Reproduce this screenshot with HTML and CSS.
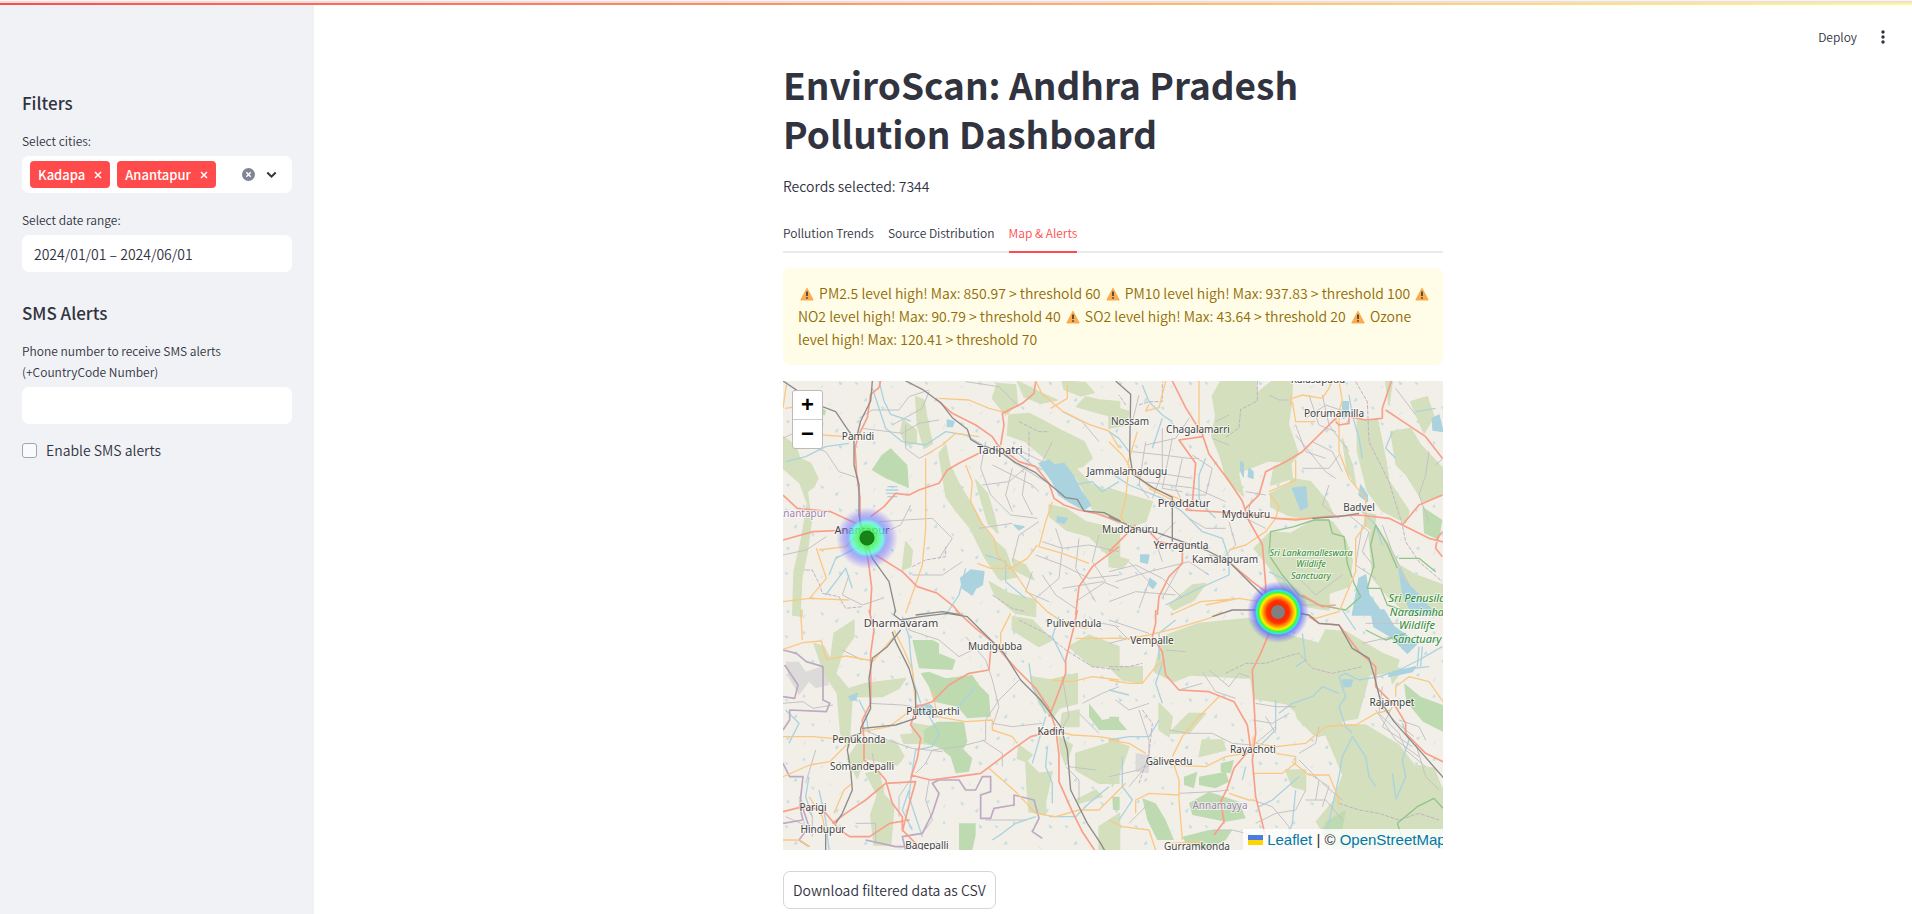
FILE: index.html
```html
<!DOCTYPE html>
<html lang="en">
<head>
<meta charset="utf-8">
<title>EnviroScan: Andhra Pradesh Pollution Dashboard</title>
<link rel="stylesheet" href="styles.css">
</head>
<body>
<svg class="defs" width="0" height="0" aria-hidden="true">
  <defs>
    <linearGradient id="amber" x1="0" y1="0" x2="0" y2="1"><stop offset="0" stop-color="#f7b649"/><stop offset="1" stop-color="#ffa94d"/></linearGradient>
    <symbol id="warn" viewBox="0 0 14 14"><path d="M7 1.200 13.200 13H.8z" fill="url(#amber)" stroke="#f9ab4e" stroke-linejoin="round"/><path d="M7 4.500v4.600M7 10.300v1.500" stroke="#3f3f46" stroke-width="1.700"/></symbol>
    <symbol id="cross" viewBox="0 0 8 8"><path d="M1 1l6 6M7 1L1 7" fill="none" stroke="#fff" stroke-width="1.500"/></symbol>
  </defs>
</svg>
<div class="decoration"><div class="gradient"></div></div>
<div class="app">
<aside class="sidebar">
  <h2>Filters</h2>
  <div class="field">
    <label for="cities">Select cities:</label>
    <div class="control multiselect">
      <span class="tag">Kadapa<button aria-label="Remove Kadapa"><svg width="8" height="8"><use href="#cross"/></svg></button></span>
      <span class="tag">Anantapur<button aria-label="Remove Anantapur"><svg width="8" height="8"><use href="#cross"/></svg></button></span>
      <input id="cities" type="text">
      <button aria-label="Clear all"><svg width="13" height="13" viewBox="0 0 13 13"><circle cx="6.500" cy="6.500" r="6.500" fill="#808495"/><path d="M4.300 4.300l4.400 4.400M8.700 4.300l-4.400 4.400" stroke="#fff" stroke-width="1.500"/></svg></button>
      <button aria-label="Open"><svg width="11" height="8" viewBox="0 0 11 8"><path d="M1.300 1.500l4.200 4.200 4.200-4.200" fill="none" stroke="#31333f" stroke-width="2"/></svg></button>
    </div>
  </div>
  <div class="field">
    <label for="dates">Select date range:</label>
    <input class="control" id="dates" type="text" value="2024/01/01 – 2024/06/01">
  </div>
  <h2>SMS Alerts</h2>
  <div class="field">
    <label for="phone">Phone number to receive SMS alerts (+CountryCode Number)</label>
    <input class="control" id="phone" type="text">
  </div>
  <label class="check"><input type="checkbox">Enable SMS alerts</label>
</aside>
<main class="main">
  <header class="toolbar">
    <button>Deploy</button>
    <button aria-label="Menu"><svg width="4" height="14" viewBox="0 0 4 14" fill="#31333f"><circle cx="2" cy="2" r="1.700"/><circle cx="2" cy="7" r="1.700"/><circle cx="2" cy="12" r="1.700"/></svg></button>
  </header>
  <div class="column">
    <h1>EnviroScan: Andhra Pradesh Pollution Dashboard</h1>
    <p class="records">Records selected: 7344</p>
    <nav class="tabs"><button>Pollution Trends</button><button>Source Distribution</button><button class="active">Map &amp; Alerts</button></nav>
    <p class="alert"><svg class="warn"><use href="#warn"/></svg> PM2.5 level high! Max: 850.97 &gt; threshold 60 <svg class="warn"><use href="#warn"/></svg> PM10 level high! Max: 937.83 &gt; threshold 100 <svg class="warn"><use href="#warn"/></svg> NO2 level high! Max: 90.79 &gt; threshold 40 <svg class="warn"><use href="#warn"/></svg> SO2 level high! Max: 43.64 &gt; threshold 20 <svg class="warn"><use href="#warn"/></svg> Ozone level high! Max: 120.41 &gt; threshold 70</p>
    <div class="map">
      <svg class="tiles" viewBox="0 0 660 469" preserveAspectRatio="xMidYMid slice">
        <defs>
          <radialGradient id="heatLow"><stop offset="0" stop-color="#30e830"/><stop offset=".28" stop-color="#3df55c"/><stop offset=".42" stop-color="#55fca0"/><stop offset=".52" stop-color="#5bf0ee" stop-opacity=".95"/><stop offset=".62" stop-color="#6c8cff" stop-opacity=".8"/><stop offset=".78" stop-color="#6a60ff" stop-opacity=".45"/><stop offset="1" stop-color="#6a60ff" stop-opacity="0"/></radialGradient>
          <radialGradient id="heatHigh"><stop offset="0" stop-color="#f01800"/><stop offset=".36" stop-color="#ff3000"/><stop offset=".46" stop-color="#ff9000"/><stop offset=".56" stop-color="#fff200"/><stop offset=".63" stop-color="#40f830"/><stop offset=".7" stop-color="#30e8f0"/><stop offset=".75" stop-color="#5060ff" stop-opacity=".7"/><stop offset="1" stop-color="#6a60ff" stop-opacity="0"/></radialGradient>
          <pattern id="ponds" width="210" height="190" patternUnits="userSpaceOnUse"><path class="pond" d="M18 22l9 3-4 4zM75 9l4 6-7 2zM124 38l9-5M180 20l3 10 7-4zM45 78l7-9 2 8zM97 96l8 2-2 6zM150 84l5 8M190 110l-9 8M22 140l10-4-4 8zM73 160l6-12M125 142l4 8 6-3zM168 168l10-6-4 10z"/></pattern>
        </defs>
        <rect width="660" height="469" fill="#f2efe9"/>
        <g transform="translate(-4 -6) scale(.33333)">
          <rect x="12" y="18" width="1980" height="1407" fill="url(#ponds)"/>
          <g class="wood">
            <path d="M12 185l36 25 15 40 32 15 22 45-12 25-20 15 12 90-12 90-16 75-6 115-22 0 4-130 22-95 18-110-22-60-22-20-29-25z"/>
            <path d="M372 135l40 30 0 40-32 5-15-40zM410 65l25 10 10 60 15 70-25 15-20-70z"/>
            <path d="M480 235l20-25 12 60 30 60 40 65 32 60 25 35 40 35 25 70-45 15-40-60-45-90-45-55-28-40z"/>
            <path d="M590 315l35 40 20 65 12 55-30-30-18-60z"/>
            <path d="M640 70l15-45 55 5 5 55-35 35zM715 18l70 35 50 22-50 10-50-20zM690 120l60-5 40 20 55 30 70 35 25 50-30 25-60 15-40-30-70-60-55-20z"/>
            <path d="M850 18l70 5 25 30-40 10-50-20zM920 65l40 10 62 5v50l-60-15-70-20zM820 230l60 40 60 60 82 30v85l-80-40-50-100-70-30z"/>
            <path d="M810 390l50 10 60 40 102 25v90l-30-10-60-60-70-20-50-40zM380 500l20 25-5 50-25 10z"/>
            <path d="M620 550l60 5 35 50-50 10zM700 550l40 20 25 45-60-30z"/>
            <path d="M630 620l60 35 80 20 0 50-60-10-60-50z"/>
          </g>
          <path class="park" d="M335 220l50 50 5 70-70-30-42-25 30-45zM130 100l12 8-6 14-12-10z"/>
        </g>
        <g transform="translate(326 -6) scale(.33333)">
          <g class="wood">
            <path d="M335 18l105 0 5 35 45-35 60 0-2 60-10 70 30 90-20 25-70-5-65 25-25 10 15 70-50-50-20-70-25-60 12-60-10-60z"/>
            <path d="M495 275l50-15 5 50-65 20zM485 355l60-30 0-15 60 10 50 60 20 45-80 5-60-10-50-25z"/>
            <path d="M700 190l30 80 10 60-25-40zM745 135l60-2 25 120 10 65 60 90-10 35-70-35-45-60-30-120z"/>
            <path d="M830 20l20 0-10 70zM905 80l50-15 20 60-30 50zM845 170l60-10 30 50 67 70v80l-60 20-50-80-30-30z"/>
            <path d="M0 90l60 20-10 40-50 10zM0 340l60 20 70 20-20 60-50 15-60-60zM0 540l60 15-20 25-40-5z"/>
            <path d="M485 470l60 5 70-40 55 5 40 55 20 60-10 80-60 20 0 50-70-10-60-40-50-80-45-55z"/>
            <path d="M780 480l20-30 40 60 30 60 50 30 82 30v90l-100 0-60-50-50-60z"/>
            <path d="M180 690l70-60 40-5-35 50-60 30zM340 225l20 20 15 80-30-60zM770 415l30 5-5 50-30-20z"/>
          </g>
          <path class="park" d="M940 395l60 40-10 60-45-20z"/>
        </g>
        <g transform="translate(-4 229) scale(.33333)">
          <path d="M20 155l40 0 20 30 60-20 10 60-40 10-20-20-30 40-30-50z" fill="#dcdbd9"/>
          <g class="wood">
            <path d="M45 0h25v20l-25-5zM165 70l60-40 0 50-35 50-20 60 50 60-10 160-25-40-10-120-40-60-30-90 30 10 20 40z"/>
            <path d="M180 245l80-25 120-15-20 30-50 25-115 0zM240 395l110 0 25 45-20 25-100-20-20 60-30-60zM260 490l40-5 15 70 30 30-10 120-50 0-10-90 20-60z"/>
            <path d="M400 340l60 10 0 55-60-10zM365 375l50-5 10 30-50 0zM700 20l60 10 60 60-40 20-80-50z"/>
            <path d="M755 200l60 10 80-20 0 90-55 15-20 30-40-45zM870 110l60-35 90 35v60l-80 0zM850 310l50-10 0 50-55 0zM720 405l40 30-20 20-25-10z"/>
            <path d="M740 450l40 40 40-5-20 90 0 40-50-10-5-60zM840 380l40 25-20 60-15-40zM890 430l130-40 0 130-60 0-70-40zM960 650l62-40v110h-62zM890 570l60-30 20 20-70 20z"/>
          </g>
          <g class="park">
            <path d="M400 90l60 0 20 10 0 30 50 20-10 30-100-5zM450 185l50 20 80-10 20 30 30 30 5 65-70 5-30-35-70-15-15-45-25-40zM435 360l40-25 80 0 10 60-10 20-60 5-60-25zM490 420l60-5 30 30-10 40-40 5-15-50zM540 640l50 0 0 35-10 45h-40zM930 280l40 50 50-10v40h-60l-30-40zM1000 560h22v40h-20z"/>
          </g>
        </g>
        <g transform="translate(326 229) scale(.33333)">
          <path d="M80 430l40 5 0 55-40-5z" fill="#dcdbd9"/>
          <g class="wood">
            <path d="M160 80l110-40 150-15 60 35 150 40 20-40 60 5 110 65 50 20-10 35-80 10-15 60-20 70-60 10-40-30-30 70-50-50-10-40-120-20-10-60-180-10-50 20-60-30z"/>
            <path d="M0 170l100 0 0 50-60-10zM440 170l40-60 80 20 70 50 20 60 35 60 20 60-80 20-60-70-90-80z"/>
            <path d="M640 350l60-5 70 0 100 60 45 60 60 10 27 70 0 170-330 0-50-80 50-60 30-80z"/>
            <path d="M840 160l40 20-30 40zM180 370l60-60 50 0-50 60zM280 390l60 0 10 30-80 20zM0 390l60 20-20 60-30 60zM530 480l60 0 0 60-40-10zM150 280l40 40-10 60-30-20z"/>
          </g>
          <g class="park">
            <path d="M0 320l20 0 35 40-40 0zM225 500l40-15-10 50-30-10zM270 500l80-15 10 30-40 20-50-10zM335 460l40-10-10 40-30-5zM240 580l60-35 90 30 20 50-60 10-100-20zM100 565l40 15 30 50 25 60-50 0-30-60zM220 680l80-20 70 0-20 30-60 30-60-20zM650 635l60-35-10 60-60 15zM885 220l50 40 67 25v80l-60-30-50-60z"/>
          </g>
        </g>
        <g transform="translate(-4 -6) scale(.33333)">
          <g class="water">
            <path d="M280 40l20 60 20 60 50 40 70 10 60-40 60 10 50 30M20 260l60-15 60-30 70-10M300 18l15 60 20 40 60 20M220 640l-20-60-60 80M560 580l-20 80-40 60M620 540l60 20 0 60 60 50M880 330l60-10 30 30 50-30M700 220l60 50 30 15M150 600l20-50 60-30"/>
            <path class="lake" d="M780 265l30-10 15 15 30-5 30 40 20 40 30 45-20 15-45-25-30-20-20-40zM545 610l30-25 40 5-5 40-20 10-10 20-30-20zM505 135l20 5-5 15-15 0zM835 425l30 5-10 15-20-5zM705 450l30 5-15 10z"/>
            <path d="M325 335h30M320 345h38M322 355h35M325 365h30"/>
          </g>
          <g class="minor">
            <path d="M12 190l60-30 60 0M60 200l80 30 40 60 60 20M240 130l40-25 80 0 30-40 60-20M250 160l120 15 50-30 60-10M380 150l0 70 40 30 40-20M300 440l160-10M395 390l-30 60-90 40M450 50l-20 50-90 50"/>
            <path d="M620 200l-15 80 30 80 60 60 80 10M640 270l60 30 60 30 20 20M610 330l80-10 60-50M700 280l-20 80 20 50M740 290l-10 70 30 60M820 200l-30 60-60-30M660 210l40 50 100 60M560 20l100 15 60 60M850 110l60 30 50 60"/>
            <path d="M790 500l60 20 80-10 90 20M770 540l80 30 80 40 90-10M830 460l20 60-10 90-70 60M900 490l-10 90 60 100M960 480l-20 80 40 60-90 60M850 640l120-20 50 20M790 600l40 60 60 40M760 590l-20 60 70 30M210 600l-20 60 60 30 60-20M12 540l70-15 60-40M400 600l90 0 60-40M460 430l60 60-40 60M600 460l100-15M700 560l20-80 60-40"/>
          </g>
          <path class="border" d="M80 585l20 0 20 40 10 30 50 10 20 35 50-5M400 575l40-20 60-10 0-30M640 660l60 40 40 10M750 170l0 80-10 20M720 140l60 30 30 0"/>
          <g class="orange">
            <path d="M18 100l40-6M12 100l10-70M130 180l70 5M480 70l90 5 60 25 60 15M560 270l20 50-5 60 30 60 40 50 10 50 50 50 40 60 60 60 60 40 60 10M440 250l0 80 0 130-10 110-50 145M440 240l50-30 40-35 70 10M770 18l20 40 60 50 80 40 60 20 30 50M820 380l-20 60-20 75 70 20 80 30M595 565l40 15 60 0 50-30 30-40M120 525l80-10 30-30M12 680l80-10 50-60-20-60-10-30M90 670l120 5M865 30l0 40-50 30"/>
          </g>
          <g class="red">
            <path d="M305 18l-5 20-25 20-10 70-25 50-12 40 5 80 10 70 0 80 25 110 10 80-5 80M470 70l50 45 70 35 50 35 20 30 60 45 50 15 40 50 15 45 30 20 45 15 50 10 70 25M665 210l10-60-5-35 60-30 35-30 5-35M600 235l-60 30-35 20-25 40-60 20-30 15-40-5-35 40-40 30M230 445l-75-35-100-10-43-40M12 495l90-25 115-5M290 540l80 50 45 45 60 20 50 40 20 25M1020 515l-80 60-40 60-10 85"/>
          </g>
          <g class="rail">
            <path d="M12 18l60 40M130 95l40 15 30 45 25 35 0 80 15 60 0 90 10 50 30 80 50 70 20 90M280 18l-5 60-30 60-10 40M380 18l50 25 55 40 35 45 45 35 10 30 25 15 60 20 50 35 60 30 60 50 30 25 35 5 20 35 60 5 50 25M410 720l80-10 60 10"/>
          </g>
        </g>
        <g transform="translate(326 -6) scale(.33333)">
          <g class="water">
            <path d="M0 170l30 20 30 40M290 250l-20 50 0 70 30 40 20 20M100 30l20 50 40 40 30 20M0 290l60 40 100 40 60 40 60 60 60 20 20 60 0 50-90 40-100 50M480 590l40 20 40 60M720 60l10 60 20 70 10 60M850 170l-20 50 30 30M920 110l60-10M740 390l60 60 20 60M160 130l-30 90"/>
            <path class="lake" d="M550 340l40-5 5 60-20 10zM420 280l12 10 0 20-14-5zM395 260l8 5 0 40-8-20zM95 540l25 0-5 25-20-5zM122 610l20 15-10 15-12-10zM700 80l18 0 0 40-15 10zM970 130l20-10 12 50-30-5zM755 330l20 30 0 20-25-20zM750 610l20-10 10 60 30 40 0 20h-80zM870 580l20 40 30 30 60 70h-70l-30-70z"/>
          </g>
          <g class="minor">
            <path d="M90 60l-20 80M70 230l90 10 80 10 30 0M110 200l-20 130 30 40M160 160l0 130-30 80M190 190l-30 150 60 10M220 250l-20 90 20 40M250 240l60 40-20 80-60 0M120 290l130 20M100 320l160 20 90 40M240 130l-40 60-90 20M310 190l50 20M320 140l40-20M360 440l20 70-60 60M200 440l-60 60 20 60M240 430l50 30 60 0M0 590l80-20 80 40 60 60M20 620l100-30 120-30 60 40M220 560l-60 110M0 680l80-30 120 10M60 560l60 60-30 80M300 540l100 20"/>
            <path d="M410 350l60 10M430 370l-20 60 60 30M480 60l30 15 30 0M560 150l30 80 60 20M590 130l60-40 60 20M600 60l30 90 50 20M610 200l60 30 30 60M560 180l90 110 30 20M580 280l80 0 30-40M640 60l20 90 60 80M660 330l-20 60 50 40M720 420l60 50-20 60 40 50M760 450l-20 120 60 40M820 450l30 80 50 100M960 230l-10 70-20 60 30 80M860 40l60 80M980 270l22-20M480 640l60 50 90 0M560 600l60 60 80-60"/>
          </g>
          <path class="border" d="M445 18l0 60-50 25-5 55-40 30M50 90l-20-30M90 90l30-10 40 0 0-60"/>
          <path class="border" d="M740 20l35 60 5 120 30 60 30 60 40 130 10 50 40 60 70 60"/>
          <g class="reserve"><path d="M485 470l70-15 60-20 45 0 10 40 35 10 10 80 20 60 20 40-45 40-80-15-60-30-50-60-40-60zM870 550l60 0 50 40M800 450l-15 60 10 60-20 70 40 0 20 50 60 20M800 450l35 60 30 70"/></g>
          <g class="orange">
            <path d="M0 200l40 40 20 30-10 100-15 60 30 30M170 18l-20 80-40 10 10-20M270 18l0 80 0 80M60 275l60 60 110 45M120 340l80 40M85 170l-30 100M480 350l80-35 0-60M480 355l30 40-10 35-30 40-60 40-50 15M550 70l30-10 60 10 20-30 10-22M550 80l10 60 60 0M690 130l0 100 30 80 50 60 0 80-30 40 0 100-50 120-70 20-80-30M690 18l10 60-20 60M545 60l0 30M495 430l120 0M290 690l100-20 60 10M185 720l90-40 120-10"/>
          </g>
          <g class="red">
            <path d="M190 18l40 80 50 80 20 60 60 80 40 60 20 60 40 70 10 120 0 30M280 185l-70 10 50 70-10 120-20 20M230 405l170 10 100 15 60 5 90-10 100-5 90 10 60 30 60 30 60 15 40 0M410 400l40-40 20-70 60-30 50-30 50-50 50-50M680 140l10 10 30-5 0-20 50 10 50-5 0-30 30-90M830 105l60 40 60 40 50 65M880 450l50-60 70-30M0 530l60-60 20-20M120 470l30 30 70 15 0 50-40 40-30 60-5 55M370 570l60 50 40 30M580 660l60 35 40-5M1000 470l-15 20-5 30 20 25"/>
          </g>
          <g class="rail">
            <path d="M20 18l45 40-3 180 10 60 60 40 60 30M190 370l0 130M0 425l90 40 60 10 140 50 70 35 60 60 40 40M610 430l80-5 60-10"/>
          </g>
        </g>
        <g transform="translate(-4 229) scale(.33333)">
          <g class="water">
            <path d="M370 20l20 60 5 60 10 80 20 60M30 400l30-60-40-40M90 500l-10 60 20 60M120 540l20 90 10 90M270 370l-10-60-20-40M440 300l40 70-20 40-50 10-10 60-10 80 20 60 20 60M390 540l-20 60 30 60M800 320l-20 70-20 70M805 410l-5 60 20 50 0 60M640 690l30-20 40-30 60-20M810 620l80 0 40-40 60-50M590 230l-60 70M750 160l10 70 40 80M840 20l-20 60 40 80"/>
            <path class="lake" d="M415 285l40 0 15 20-50 10zM210 260l25-10-5 20-15 0z"/>
          </g>
          <g class="minor">
            <path d="M12 280l60-5 30 20 60-10M190 120l60 30M270 280l100 5 30 5M250 355l60 30 90 30 90 10M390 30l0 30 90 30M480 90l60 50 40-20M560 80l60 70 20 60 20 80-20 60M720 210l-60 60-40 60 0 60-80 20-80 10-20 40-30 30M610 390l60 40 0 40M640 340l60 10 90-10M450 510l-10 60 20 60-30 40M230 640l60 0 0 60M620 630l120 0M850 200l20 120-30 50M860 470l40 40 0 60M280 430l10 60M400 500l-40 60 0 60M930 20l40 40M910 50l60-10 50 10M950 480l-80-10M910 280l60-30 50-20M900 310l60 60M60 560l40 60 0 60M20 620l90 40M110 420l-30 100"/>
          </g>
          <g class="region">
            <path d="M12 120l40 10 30 25 50 15 0 100 20 10-10 25-110-5 0 30-20 30M12 260l35 5 10-40-40-60M12 460l20 40 40 0-10 90 10 40-60 10M70 590l20 60-30 40 30 20M380 720l-10-40 60-10 30-60 20-60-20-30 20-10 60 0 20 30 30 0 20-40 25 0 0 45-30 10 0 70 30 0 10-30 60-10 0-30 60 15 15 55-20 40 30 20M260 690l90 20 40 0"/>
          </g>
          <path class="border" d="M720 30l80 40 60 50 80 50 82 10"/>
          <g class="orange">
            <path d="M12 118l60-20 55-5 15 55 60-10 80 15 60-70M70 90l-5-90M345 60l30 60 25 60 10 110-80 60-80 15M12 380l90 0 60 5 70 5M12 500l80-35 60-10 50-50M460 240l15 80 85 15 80-5 0 30 60 20 15 20M90 560l40 60 10 50M165 610l30-70 25-20M12 690h50l30 20M630 475l80 70 60 65 60 10 70-20 60 0 20-20 60-60M665 120l0-50 30-60M820 210l60 5 60-15 80 10M820 360l60 15 80 5 60 10M890 85h130"/>
          </g>
          <g class="red">
            <path d="M270 0l15 60-10 70 0 70 0 80-25 50 5 60 0 60 40 30 25 30 20 70 30 40 0 40 40 40 20 50M320 520l90-5-20 70-20 80M12 605l60-15 60 10 50 60 30 20 60 0 60-40 60-10M320 520l-60 50-60 40-40 30M395 495l60 15 80-10 70-10 40-30 60-45 50-35 80-20M415 285l-20 60 30 40-10 60-20 60M635 120l-5 60-60 10-60 35-50 50-45 15M530 0l60 55 50 40 70 80 60 60 40 60 20 60 10 80 0 80 40 90 30 60 40 60M895 0l-10 50-25 100 0 40-30 80-20 50"/>
          </g>
          <g class="rail">
            <path d="M350 0l-5 15 20 15 60-10 80-10 60 10 50 50 60 60 50 80 60 60 60 80 20 70 10 120 50 100 40 60 50 90M365 60l-40 50-45 35-10 60 5 90-30 60 0 15-30 10-10 40 10 60 5 60-30 70-20 30M250 355l100-10 60-20 0-80-20-70-40-80-10-30M140 670v50"/>
          </g>
        </g>
        <g transform="translate(326 229) scale(.33333)">
          <g class="water">
            <path d="M200 30l-50 40 0 80M0 240l60 15M160 160l-20 60 20 60M0 390l60-10 60 0 30-50M40 440l0 90 30 40-40 60M500 270l0 90-60 60M510 310l40-30 60-20 30-30 50 20M690 200l20-10 40 20 60-10 60-20 60-30 70-40M690 200l20 60-20 30 20 60 20 20M730 380l-30 60-10 60-20 90-20 90M730 380l40 60 10 60 20 30M900 390l-20 60 10 50-30 70M700 0l40 60M580 70l10 80-30 20M910 100l80-10M870 180l90-10M940 110l-5 60M930 110l-5 60M570 500l-80 70-40 20M400 510l10-40M560 540l-10 100-20 60M850 490l10 70M880 340l20 50"/>
            <path class="lake" d="M785 0h40l30 50 70 50-30 30-50-50-50-30zM700 210l30 0-5 20-20 0zM840 190l80-20-10 15-70 15z"/>
          </g>
          <g class="minor">
            <path d="M0 30l60 20 60 20M0 100l60-15 50 5M20 50l40 40M170 120l60 5M280 185l40 60 60 20M300 180l60 50 30-40 30 10M210 240l70-20M180 360l60 10 70 0 60 30 60 5M120 280l-60 20-40-30M440 280l60 10 60 0M430 330l60 10 50-30M470 320l30 50M440 400l60-50M210 550l100-5 50-5M0 500l90-20 50-40M90 300l30 90 0 60M60 530l50-60 40-10M60 640l60-60M430 570l60 20 50 60 0 60M440 640l60-30 60-10 30-60M570 430l50-30 10-50M570 450l60 60-10 60M600 490l60 40-20 60M640 520l60 50M590 570l60 0 50 60M760 100l90-20 50 30M805 280l60 60 50 40M820 230l-10 80 60 60M850 290l-30 60 90 60M870 330l60 20 20 40M800 300l60 90 70 50M870 370l20 50 60 50M920 400l30 100 40 40M310 660l60 0 80 20M640 650l60 60M770 40l120 0"/>
          </g>
          <path class="border" d="M0 170l60 0 40-10M350 190l60-30 60 0 60-20 40-10 40 45 60 15 90-20M100 300l30 40-10 90-30 90M690 580l60 20 60 10 60 20 60-20 60 20"/>
          <g class="reserve"><path d="M770 60l60 30 60-20M865 640l60-50 50-25 27 30M865 640l20 60"/></g>
          <g class="orange">
            <path d="M0 85l60 0 60-10 80-20 100-30 40-20M0 210l60 10 40 0 40-50 25-20M150 440l40 25 100 5 60-30 60-10M190 440l30-60 50-60 60-60M0 390l60 10 50 30M80 610l0-40 40-20 90 5M0 630l40 20 80 10 20 60M190 450l20 60 0 60 10 120M430 490l90 0 40-30 0-20-60-10M440 400l60 10 90-10 60-50 60-5 30 0 60-35 45-10M550 455l50 40 60 0 25 60 5 30M360 550l60 20 15 0M860 260l0-30 40-30 60 15 42 60M180 700l100-5M432 380l0 60"/>
          </g>
          <g class="red">
            <path d="M140 0l0 40-10 40 30 45 10 70 40 45 90 5 75 30 40 70 10 70-50 60-20 60-20 40 10 60-30 40M480 70l-25 60-25 50 5 100 5 90-10 80 10 110 20 80 10 40M600 20l30 20 60 5 60 80 50 45 0 60 60 60 30 50 0 30 60 60 52 25"/>
          </g>
          <g class="rail">
            <path d="M310 20l60-20 70 0M570 10l30 5 30 25 60 5 40 70 50 30 15 50 20 80 40 60 80 90 87 100"/>
          </g>
        </g>
        <g class="labels">
          <text x="75" y="59">Pamidi</text><text class="town" x="217" y="73">Tadipatri</text>
          <text x="347" y="44">Nossam</text><text x="415" y="52">Chagalamarri</text>
          <text x="535" y="2">Kalasapadu</text><text x="551" y="36">Porumamilla</text>
          <text x="344" y="94">Jammalamadugu</text><text class="town" x="401" y="126">Proddatur</text>
          <text x="463" y="137">Mydukuru</text><text x="576" y="130">Badvel</text>
          <text x="347" y="152">Muddanuru</text><text x="398" y="168">Yerraguntla</text><text x="442" y="182">Kamalapuram</text>
          <text class="town" x="79" y="153">Anantapur</text><text class="district" x="19" y="136">Anantapur</text>
          <text class="town" x="118" y="246">Dharmavaram</text><text x="212" y="269">Mudigubba</text><text x="291" y="246">Pulivendula</text>
          <text x="369" y="263">Vempalle</text><text x="609" y="325">Rajampet</text>
          <text x="150" y="334">Puttaparthi</text><text x="268" y="354">Kadiri</text><text x="76" y="362">Penukonda</text>
          <text x="79" y="389">Somandepalli</text><text x="30" y="430">Parigi</text><text x="40" y="452">Hindupur</text><text x="144" y="468">Bagepalli</text>
          <text x="470" y="372">Rayachoti</text><text x="386" y="384">Galiveedu</text><text class="district" x="437" y="428">Annamayya</text><text x="414" y="469">Gurramkonda</text>
          <g class="nature"><text x="528" y="175">Sri Lankamalleswara</text><text x="528" y="186">Wildlife</text><text x="528" y="198">Sanctuary</text></g>
          <g class="nature big"><text x="634" y="221">Sri Penusila</text><text x="634" y="235">Narasimha</text><text x="634" y="248">Wildlife</text><text x="634" y="262">Sanctuary</text></g>
        </g>
        <circle cx="84" cy="157" r="31" fill="url(#heatLow)" opacity=".82"/>
        <circle cx="84" cy="157" r="7" fill="#178217" stroke="#147014" stroke-width="1"/>
        <circle cx="495" cy="231" r="31" fill="url(#heatHigh)"/>
        <circle cx="495" cy="231" r="7" fill="#808080"/>
      </svg>
      <div class="zoom"><button aria-label="Zoom in">+</button><button aria-label="Zoom out">−</button></div>
      <div class="attribution"><svg width="15" height="10" viewBox="0 0 15 10"><path fill="#4c7be1" d="M0 0h15v5H0z"/><path fill="#ffd500" d="M0 5h15v5H0z"/></svg> <a href="#leaflet">Leaflet</a> | © <a href="#osm">OpenStreetMap</a></div>
    </div>
    <button class="download">Download filtered data as CSV</button>
  </div>
</main>
</div>
</body>
</html>
```

FILE: styles.css
```css
* { box-sizing: border-box; }
body {
  margin: 0;
  min-height: 100vh;
  display: flex;
  flex-direction: column;
  background: #fff;
  color: #31333f;
  font: 350 14px/23px "Noto Sans CJK SC", "Noto Sans", sans-serif;
}
button, input { font: inherit; color: inherit; }
button { border: 0; padding: 0; background: none; cursor: pointer; }
h1, h2, p { margin: 0; }
a { color: #0078a8; text-decoration: none; }
.defs { position: absolute; }

.decoration { padding-top: 1px; background: #f5f3f4; }
.gradient { height: 4px; border-top: 2px solid #efdede; background: linear-gradient(90deg, #ff4b4b, #fffd80) padding-box; }
.app { flex: 1; display: flex; }

.sidebar { flex: none; width: 314px; padding: 83px 22px 20px; background: #f0f2f6; }
.sidebar h2 { font-size: 17px; line-height: 30px; font-weight: 500; margin-bottom: 12px; }
.field { display: flex; flex-direction: column; margin-bottom: 16px; }
.field label { font-size: 12px; line-height: 21px; margin-bottom: 5px; }
.control { width: 100%; height: 37px; border: 0; border-radius: 7px; background: #fff; padding: 0 12px; }
.multiselect { display: flex; align-items: center; gap: 7px; padding: 0 15px 0 8px; }
.multiselect input { flex: 1; min-width: 0; border: 0; padding: 0; background: none; }
.multiselect > button { display: flex; margin-left: 4px; }
.tag { display: flex; align-items: center; gap: 9px; height: 27px; padding: 0 8px; border-radius: 4px; background: #ff4b4b; color: #fff; font-size: 13px; font-weight: 500; }
.tag button { display: flex; }
.sidebar .field + h2 { margin-top: 26px; }
.check { display: flex; align-items: center; gap: 9px; line-height: 20px; }
.check input { appearance: none; width: 15px; height: 15px; margin: 0; border: 1px solid #a3a5ad; border-radius: 3px; background: #f9fafb; }

.main { flex: 1; padding-bottom: 5px; }
.toolbar { display: flex; justify-content: flex-end; align-items: center; gap: 24px; height: 55px; padding: 8px 27px 0; font-size: 12px; }
.toolbar button { display: flex; }
.column { max-width: 660px; margin: 0 auto; }
h1 { font-size: 37px; line-height: 49px; font-weight: 700; margin-bottom: 17px; }
.tabs { display: flex; gap: 14px; height: 38px; margin: 17px 0 15px; font-size: 12px; box-shadow: inset 0 -2px #e9eaeb; }
.tabs button { padding-bottom: 2px; border-bottom: 2px solid transparent; }
.tabs .active { color: #ff4b4b; border-color: #ff4b4b; }
.alert { padding: 14px 0 14px 15px; border-radius: 7px; background: #fffce7; color: #926c05; }
.warn { width: 14px; height: 14px; margin: 0 2px; vertical-align: -2px; }

.map { position: relative; margin: 16px 0 21px; overflow: hidden; }
.tiles { display: block; width: 100%; }
.wood { fill: #d3dfbd; stroke: #d3dfbd; stroke-width: 4; stroke-linejoin: round; }
.park { fill: #bddab1; }
.pond { fill: #aad3df; stroke: #aad3df; stroke-width: 2; opacity: .7; }
.water, .minor, .orange, .red, .rail, .border, .region, .reserve { fill: none; stroke-linejoin: round; }
.water { stroke: #aad3df; stroke-width: 4; }
.lake { fill: #aad3df; }
.minor { stroke: #c4c2c5; stroke-width: 3; }
.orange { stroke: #fbc884; stroke-width: 4; }
.red { stroke: #f99f88; stroke-width: 5; }
.rail { stroke: #8d8b89; stroke-width: 4; }
.border { stroke: #c2b2c2; stroke-width: 3; stroke-dasharray: 12 4; }
.region { stroke: #bda9c2; stroke-width: 5; }
.reserve { stroke: #8fc48a; stroke-width: 4; }
.labels { font: 10px "Noto Sans", sans-serif; text-anchor: middle; fill: #444; stroke: #fff; stroke-opacity: .6; stroke-width: 2px; paint-order: stroke; }
.town { font-size: 11px; }
.district { fill: #a283ad; }
.nature { font-size: 9px; font-style: italic; fill: #2f8a33; }
.big { font-size: 11px; }
.zoom { position: absolute; left: 9px; top: 9px; display: flex; flex-direction: column; border: 1px solid #bbb; border-radius: 3px; background: #fff; }
.zoom button { width: 29px; height: 28px; color: #000; font: 700 22px/28px "Liberation Sans", Arial, sans-serif; }
.zoom button + button { height: 29px; border-top: 1px solid #ccc; }
.attribution { position: absolute; right: 0; bottom: 0; width: 200px; padding: 0 5px; overflow: hidden; white-space: nowrap; background: rgba(255, 255, 255, .8); color: #333; font: 15px/21px "Liberation Sans", Arial, sans-serif; }
.download { display: block; height: 38px; padding: 0 9px; border: 1px solid #d5d6d9; border-radius: 7px; }
```
